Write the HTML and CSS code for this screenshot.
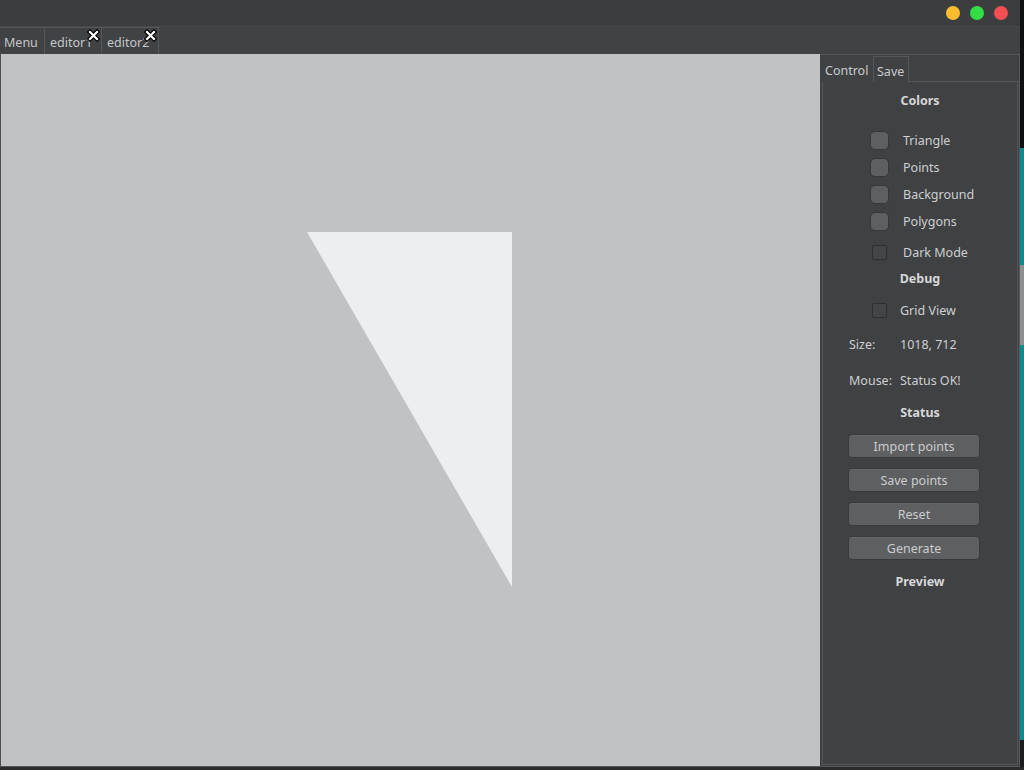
FILE: index.html
```html
<!DOCTYPE html>
<html>
<head>
<meta charset="utf-8">
<link rel="stylesheet" href="styles.css">
</head>
<body>
<div class="screen">
  <div class="window">
    <div class="titlebar">
      <div class="lights">
        <span class="light yellow"></span>
        <span class="light green"></span>
        <span class="light red"></span>
      </div>
    </div>
    <div class="tabbar">
      <div class="tab tab-menu">Menu</div>
      <div class="tab tab-editor">editor1
        <svg class="close" width="13" height="13" viewBox="0 0 13 13"><path d="M3 3L10 10M10 3L3 10" stroke="#000" stroke-width="4.5" stroke-linecap="square"/><path d="M3 3L10 10M10 3L3 10" stroke="#fff" stroke-width="2.2" stroke-linecap="square"/></svg>
      </div>
      <div class="tab tab-editor">editor2
        <svg class="close" width="13" height="13" viewBox="0 0 13 13"><path d="M3 3L10 10M10 3L3 10" stroke="#000" stroke-width="4.5" stroke-linecap="square"/><path d="M3 3L10 10M10 3L3 10" stroke="#fff" stroke-width="2.2" stroke-linecap="square"/></svg>
      </div>
    </div>
    <div class="main">
      <div class="canvas">
        <svg class="drawing" width="819" height="712" viewBox="0 0 819 712">
          <polygon points="306,178 511,178 511,533" fill="#eceff0"/>
        </svg>
      </div>
      <div class="panel">
        <div class="ptabs">
          <div class="ptab active">Control</div>
          <div class="ptab">Save</div>
          <div class="ptab-fill"></div>
        </div>
        <div class="frame">
          <div class="heading h-colors">Colors</div>
          <div class="row color-row first"><span class="swatch"></span><span>Triangle</span></div>
          <div class="row color-row"><span class="swatch"></span><span>Points</span></div>
          <div class="row color-row"><span class="swatch"></span><span>Background</span></div>
          <div class="row color-row"><span class="swatch"></span><span>Polygons</span></div>
          <div class="row check-row dark"><span class="check"></span><span>Dark Mode</span></div>
          <div class="heading h-debug">Debug</div>
          <div class="row check-row grid"><span class="check"></span><span>Grid View</span></div>
          <div class="row info-row size"><span class="label">Size:</span><span>1018, 712</span></div>
          <div class="row info-row"><span class="label">Mouse:</span><span>Status OK!</span></div>
          <div class="heading h-status">Status</div>
          <div class="buttons">
            <div class="btn">Import points</div>
            <div class="btn">Save points</div>
            <div class="btn">Reset</div>
            <div class="btn">Generate</div>
          </div>
          <div class="heading h-preview">Preview</div>
        </div>
      </div>
    </div>
  </div>
  <div class="desktop"></div>
</div>
<div class="taskbar"></div>
</body>
</html>
```
FILE: styles.css
```css
* { box-sizing: border-box; }
html, body { margin: 0; padding: 0; }
body {
  width: 1024px;
  height: 770px;
  overflow: hidden;
  background: #2b2c2e;
  font-family: "Noto Sans", "DejaVu Sans", sans-serif;
  font-size: 12.5px;
  color: #cfd0d1;
}
.screen {
  display: flex;
  height: 767px;
}
.window {
  width: 1020px;
  display: flex;
  flex-direction: column;
  border-bottom: 1px solid #55575a;
  background: #3d3e40;
}
.titlebar {
  height: 26px;
  background: #3c3d3f;
  border-top-right-radius: 6px;
  display: flex;
  justify-content: flex-end;
  align-items: center;
  padding-right: 12px;
}
.lights { display: flex; gap: 10px; }
.light { width: 14px; height: 14px; border-radius: 50%; display: block; }
.yellow { background: #fbbd2d; }
.green { background: #34dc46; }
.red { background: #f14f53; }

.tabbar {
  height: 28px;
  background: #414244;
  border-top: 1px solid #47484a;
  display: flex;
  align-items: flex-end;
}
.tab {
  position: relative;
  height: 27px;
  border: 1px solid #56575a;
  border-bottom: none;
  padding: 3px 0 0 4px;
  display: flex;
  align-items: center;
  color: #c4c7ca;
  background: #414244;
}
.tab-menu { width: 45px; border-left: none; color: #c6c6c6; }
.tab-editor { width: 57px; border-left: none; padding-left: 5px; }
.close { position: absolute; top: 1px; right: 1px; }

.main {
  height: 712px;
  display: flex;
}
.canvas {
  width: 820px;
  background: #bfc3c6;
  border-left: 1px solid #4d4e50;
}
.drawing { display: block; }

.panel {
  width: 200px;
  background: #404143;
  border-top: 1px solid #55565a;
  border-right: 1px solid #595a5d;
  display: flex;
  flex-direction: column;
}
.ptabs {
  height: 27px;
  display: flex;
  align-items: stretch;
}
.ptab {
  padding: 3px 3px 0 5px;
  display: flex;
  align-items: center;
  color: #c8cacc;
}
.ptab.active { width: 53px; }
.ptab:not(.active) {
  border: 1px solid #55565a;
  border-bottom: none;
  margin-top: 1px;
  width: 36px;
  padding-left: 3px;
}
.ptab-fill { flex: 1; border-bottom: 1px solid #55565a; }
.frame {
  flex: 1;
  margin-left: 2px;
  margin-right: 1px;
  margin-bottom: 1px;
  padding-top: 2px;
  border: 1px solid #545558;
  border-top: none;
  display: flex;
  flex-direction: column;
}
.heading {
  font-weight: bold;
  color: #d6d7d8;
  text-align: center;
  height: 24px;
  line-height: 24px;
}
.h-colors { height: 34px; line-height: 34px; }
.h-debug { margin-top: 1px; }
.h-preview { margin-top: 10px; }
.row {
  display: flex;
  align-items: center;
  color: #cdcfd1;
}
.color-row { height: 27px; padding-left: 47px; gap: 14px; }
.color-row.first { margin-top: 9px; }
.swatch {
  width: 19px;
  height: 19px;
  border-radius: 5px;
  background: #5e5f61;
  border: 1px solid #36373a;
}
.check-row { height: 28px; padding-left: 49px; }
.check-row.dark { margin-top: 3px; gap: 16px; }
.check-row.grid { margin-top: 5px; gap: 13px; }
.check {
  width: 15px;
  height: 15px;
  border-radius: 2px;
  background: #444547;
  border: 1px solid #2e2f31;
}
.info-row { height: 36px; padding-left: 26px; }
.info-row.size { margin-top: 2px; }
.label { width: 51px; }
.h-status { margin-top: 3px; }
.buttons {
  display: flex;
  flex-direction: column;
  gap: 10px;
  padding-left: 25px;
  margin-top: 9px;
}
.btn {
  width: 132px;
  height: 24px;
  border-radius: 4px;
  background: #5e5f61;
  border: 1px solid #38393b;
  box-shadow: inset 0 1px 0 rgba(255,255,255,0.06);
  color: #cbcccd;
  display: flex;
  align-items: center;
  justify-content: center;
}
.desktop {
  width: 4px;
  background: linear-gradient(to bottom, #0f1011 0, #0f1011 148px, #0d8c90 148px, #0d8c90 265px, #8c908e 265px, #8c908e 345px, #0d8c90 345px, #0d8c90 740px, #1c1d1f 740px);
}
.taskbar {
  height: 3px;
  background: #2a2b2d;
}
```
